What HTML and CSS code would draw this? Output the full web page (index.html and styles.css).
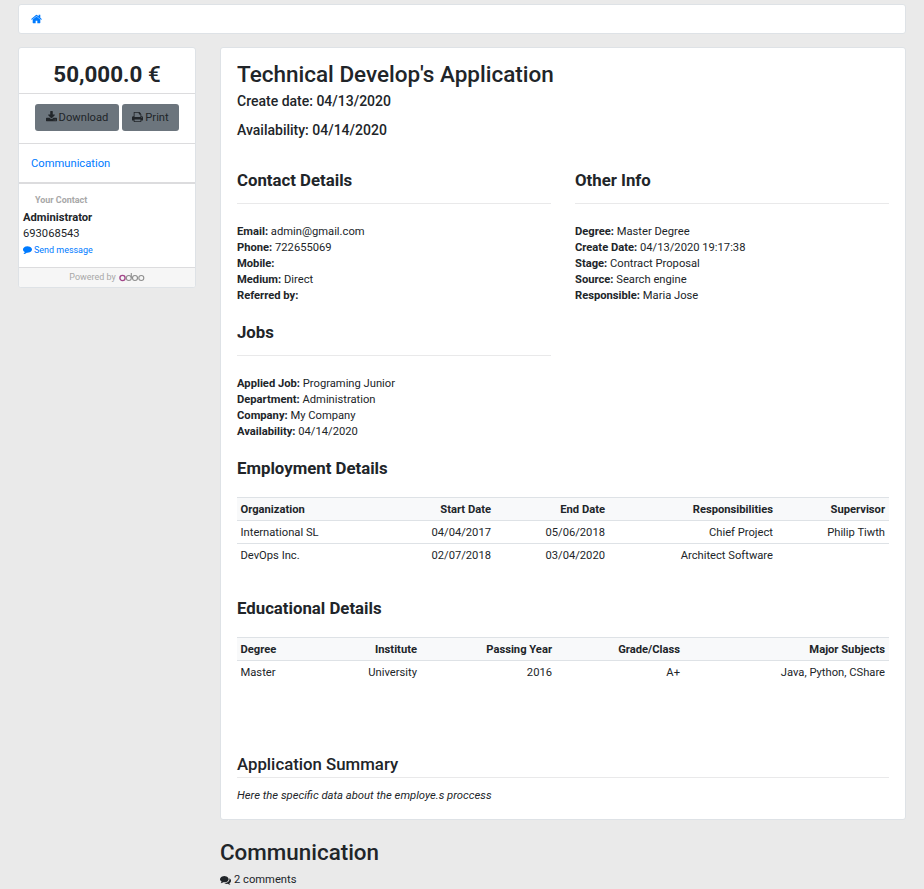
FILE: index.html
```html
<!DOCTYPE html>
<html lang="en">
<head>
<meta charset="utf-8">
<title>Technical Develop's Application</title>
<link rel="stylesheet" href="styles.css">
</head>
<body>
<nav class="breadcrumb"><a href="#" aria-label="Home"><svg class="icon home" viewBox="0 0 1664 1792"><path d="M1408 992v480q0 26-19 45t-45 19h-384v-384h-256v384h-384q-26 0-45-19t-19-45v-480q0-1 .5-3t.5-3l575-474 575 474q1 2 1 6zm223-69l-62 74q-8 9-21 11h-3q-13 0-21-7l-692-577-692 577q-12 8-24 7-13-2-21-11l-62-74q-8-10-7-23.500t11-21.500l719-599q32-26 76-26t76 26l244 204v-195q0-14 9-23t23-9h192q14 0 23 9t9 23v408l219 182q10 8 11 21.500t-7 23.500z"/></svg></a></nav>
<div class="layout">
  <aside class="sidebar">
    <h2 class="amount"><b>50,000.0</b> €</h2>
    <div class="actions">
      <a class="btn download"><svg class="icon" viewBox="64 0 1664 1792"><path d="M1344 1344q0-26-19-45t-45-19-45 19-19 45 19 45 45 19 45-19 19-45zm256 0q0-26-19-45t-45-19-45 19-19 45 19 45 45 19 45-19 19-45zm128-224v320q0 40-28 68t-68 28h-1472q-40 0-68-28t-28-68v-320q0-40 28-68t68-28h465l135 136q58 56 136 56t136-56l136-136h464q40 0 68 28t28 68zm-325-569q17 41-14 70l-448 448q-18 19-45 19t-45-19l-448-448q-31-29-14-70 17-39 59-39h256v-448q0-26 19-45t45-19h256q26 0 45 19t19 45v448h256q42 0 59 39z"/></svg><span>Download</span></a>
      <a class="btn print"><svg class="icon" viewBox="64 0 1664 1792"><path d="M448 1536h896v-256h-896v256zm0-640h896v-384h-160q-40 0-68-28t-28-68v-160h-640v640zm1152 64q0-26-19-45t-45-19-45 19-19 45 19 45 45 19 45-19 19-45zm128 0v416q0 13-9.500 22.500t-22.500 9.500h-224v160q0 40-28 68t-68 28h-960q-40 0-68-28t-28-68v-160h-224q-13 0-22.500-9.500t-9.500-22.500v-416q0-79 56.500-135.500t135.500-56.500h64v-544q0-40 28-68t68-28h672q40 0 88 20t76 48l152 152q28 28 48 76t20 88v256h64q79 0 135.500 56.500t56.500 135.500z"/></svg><span>Print</span></a>
    </div>
    <div class="side-nav"><a href="#communication">Communication</a></div>
    <div class="contact">
      <div class="contact-title">Your Contact</div>
      <div><b>Administrator</b></div>
      <div>693068543</div>
      <a class="message" href="#communication"><svg class="icon" viewBox="0 0 1792 1792"><path d="M1792 896q0 174-120 321.500t-326 233-450 85.500q-70 0-145-8-198 175-460 242-49 14-114 22-17 2-30.500-9t-17.500-29v-1q-3-4-.5-12t2-10 4.500-9.500l6-9 7-8.500 8-9q7-8 31-34.500t34.500-38 31-39.500 32.500-51 27-59 26-76q-157-89-247.500-220t-90.500-281q0-130 71-248.500t191-204.500 286-136.500 348-50.500q244 0 450 85.500t326 233 120 321.500z"/></svg><span>Send message</span></a>
    </div>
    <div class="powered"><span>Powered by</span><svg class="odoo" viewBox="0 0 26 10" role="img" aria-label="odoo"><circle class="first" cx="3.500" cy="6" r="2.600"/><circle cx="9.800" cy="6" r="2.500"/><path d="M12.300 6V1"/><circle cx="16" cy="6" r="2.500"/><circle cx="22.300" cy="6" r="2.500"/></svg></div>
  </aside>
  <main>
    <article class="card">
      <h1 class="title">Technical Develop's Application</h1>
      <h4 class="created">Create date: 04/13/2020</h4>
      <h4 class="available">Availability: 04/14/2020</h4>
      <div class="columns">
        <section>
          <h3>Contact Details</h3><hr>
          <div><b>Email:</b> admin@gmail.com</div>
          <div><b>Phone:</b> 722655069</div>
          <div><b>Mobile:</b></div>
          <div><b>Medium:</b> Direct</div>
          <div><b>Referred by:</b></div>
        </section>
        <section>
          <h3>Other Info</h3><hr>
          <div><b>Degree:</b> Master Degree</div>
          <div><b>Create Date:</b> 04/13/2020 19:17:38</div>
          <div><b>Stage:</b> Contract Proposal</div>
          <div><b>Source:</b> Search engine</div>
          <div><b>Responsible:</b> Maria Jose</div>
        </section>
        <section>
          <h3>Jobs</h3><hr>
          <div><b>Applied Job:</b> Programing Junior</div>
          <div><b>Department:</b> Administration</div>
          <div><b>Company:</b> My Company</div>
          <div><b>Availability:</b> 04/14/2020</div>
        </section>
      </div>
      <h3>Employment Details</h3>
      <table class="employment">
        <colgroup><col class="e1"><col class="e2"><col class="e3"><col class="e4"><col></colgroup>
        <thead><tr><th>Organization</th><th>Start Date</th><th>End Date</th><th>Responsibilities</th><th>Supervisor</th></tr></thead>
        <tbody>
          <tr><td>International SL</td><td>04/04/2017</td><td>05/06/2018</td><td>Chief Project</td><td>Philip Tiwth</td></tr>
          <tr><td>DevOps Inc.</td><td>02/07/2018</td><td>03/04/2020</td><td>Architect Software</td><td></td></tr>
        </tbody>
      </table>
      <h3>Educational Details</h3>
      <table class="education">
        <colgroup><col class="d1"><col class="d2"><col class="d3"><col class="d4"><col></colgroup>
        <thead><tr><th>Degree</th><th>Institute</th><th>Passing Year</th><th>Grade/Class</th><th>Major Subjects</th></tr></thead>
        <tbody><tr><td>Master</td><td>University</td><td>2016</td><td>A+</td><td>Java, Python, CShare</td></tr></tbody>
      </table>
      <h3 class="summary-title">Application Summary</h3>
      <p class="summary"><em>Here the specific data about the employe.s proccess</em></p>
    </article>
    <section id="communication">
      <h1>Communication</h1>
      <div class="comments"><svg class="icon" viewBox="0 0 1792 1792"><path d="M1408 768q0 139-94 257t-256.500 186.500-353.500 68.500q-86 0-176-16-124 88-278 128-36 9-86 16h-3q-11 0-20.500-8t-11.500-21q-1-3-1-6.500t.5-6.500 2-6l2.500-5 3.500-5.500 4-5 4.500-5 4-4.500q5-6 23-25t26-29.500 22.500-29 25-38.500 20.500-44q-124-72-195-177t-71-224q0-139 94-257t256.500-186.500 353.500-68.500 353.500 68.500 256.500 186.500 94 257zm384 256q0 120-71 224.500t-195 176.500q10 24 20.500 44t25 38.500 22.500 29 26 29.500 23 25q1 1 4 4.500t4.500 5 4 5 3.500 5.500l2.500 5 2 6 .5 6.500-1 6.500q-3 14-13 22t-22 7q-50-7-86-16-154-40-278-128-90 16-176 16-271 0-472-132 58 4 88 4 161 0 309-45t264-129q125-92 192-212t67-254q0-77-23-152 129 71 204 178t75 230z"/></svg><span>2 comments</span></div>
    </section>
  </main>
</div>
</body>
</html>
```
FILE: styles.css
```css
* { box-sizing: border-box; }
html { overflow: hidden; }
body {
  margin: 0;
  padding: 4px 18px 0;
  background: #eaeaea;
  color: #212529;
  font: 11.200px/16px Roboto, "Liberation Sans", sans-serif;
}
a { color: #007bff; text-decoration: none; }
b, th { font-weight: 700; }
h1, h2, h3, h4, p { margin: 0; }
h1 { font-size: 22.400px; line-height: 26px; font-weight: 500; }
h3 { padding-bottom: 2px; font-size: 16.800px; line-height: 18px; font-weight: 700; }
h4 { font-size: 14px; line-height: 17px; font-weight: 500; }
.icon { display: block; flex: none; width: 11px; height: 12px; fill: currentColor; }

.breadcrumb, .sidebar, .card {
  background: #fff;
  border: 1px solid #dee2e6;
  border-radius: 3px;
}
.breadcrumb { height: 30px; padding: 8px 12px; }
.layout {
  display: grid;
  grid-template-columns: 178px 686px;
  column-gap: 24px;
  align-items: start;
  margin-top: 13px;
}

.sidebar { overflow: hidden; }
.amount {
  height: 46px;
  padding-top: 13px;
  border-bottom: 1px solid #dcdcde;
  text-align: center;
  font-size: 22.400px;
  line-height: 26px;
  font-weight: 500;
}
.actions {
  display: flex;
  justify-content: center;
  gap: 3px;
  height: 50px;
  padding-top: 10px;
  border-bottom: 1px solid #dcdcde;
}
.btn {
  display: flex;
  align-items: center;
  justify-content: center;
  gap: 2px;
  height: 27px;
  border-radius: 3px;
  background: #6c757d;
  color: #212529;
}
.btn .icon { margin-bottom: 1px; }
.download { width: 84px; }
.print { width: 57px; }
.side-nav { height: 40px; padding: 12px 12px 0; border-bottom: 2px solid #dcdcde; }
.contact { height: 84px; padding: 9px 4px 0; border-bottom: 1px solid #dcdcde; }
.contact-title { padding-left: 12px; margin-bottom: 1px; color: #a8a8a8; font-size: 8.960px; line-height: 15px; font-weight: 700; }
.contact-title + div { padding-top: 1px; }
.message { display: flex; align-items: center; gap: 2px; height: 16px; font-size: 8.960px; }
.message .icon { width: 9px; height: 9px; margin-bottom: 1px; }
.powered {
  display: flex;
  align-items: center;
  justify-content: center;
  gap: 3px;
  height: 19px;
  padding-bottom: 1px;
  background: #f6f6f6;
  color: #a8a8a8;
  font-size: 8.960px;
}
.odoo { width: 26px; height: 10px; fill: none; stroke: #8f8f8f; stroke-width: 1.100; }
.odoo .first { stroke: #a24689; stroke-width: 1.400; }

.card { height: 773px; padding: 13px 16px 0; }
.title { font-size: 22.500px; }
.created { margin-top: 6px; }
.available { margin-top: 12px; }
.columns {
  display: grid;
  grid-template-columns: 1fr 1fr;
  gap: 19px 24px;
  margin: 32px 0 19px;
}
hr { height: 1px; margin: 12px 0 20px; border: 0; background: #e9e9ea; }

table { width: 100%; table-layout: fixed; border-collapse: collapse; margin-top: 18px; }
th, td { height: 23px; padding: 4px 4px 2px; border-top: 1px solid #dee2e6; text-align: right; line-height: 16px; }
th:first-child, td:first-child { padding-left: 3.500px; text-align: left; }
thead { background: #f8f9fa; }
.e1 { width: 144px; }
.e2 { width: 114px; }
.e3 { width: 114px; }
.e4 { width: 168px; }
.d1 { width: 84px; }
.d2 { width: 100px; }
.d3 { width: 135px; }
.d4 { width: 128px; }
table + h3 { margin-top: 32px; }
table + .summary-title { margin-top: 72px; height: 23px; border-bottom: 1px solid #e9e9ea; font-weight: 500; }
.summary { margin-top: 10px; font-size: 11.280px; }

#communication { margin-top: 19px; }
.comments { display: flex; align-items: center; gap: 3px; margin-top: 7px; }
.comments .icon { margin-bottom: 1px; }
```
